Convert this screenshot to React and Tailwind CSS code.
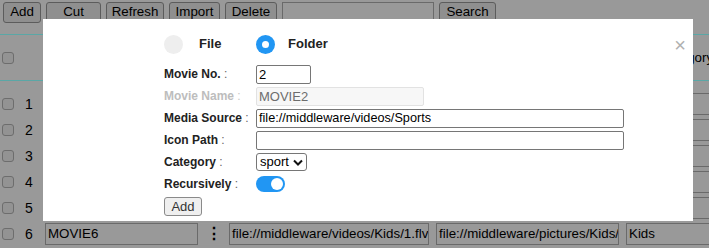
import React from 'react';

const rows = [1, 2, 3, 4, 5, 6];

const ToolButton = ({ label, width }) => (
  <button
    className="h-[21px] shrink-0 rounded-[3px] border border-[#5c5c5c] bg-[#8f8f8f] text-[13.33px] leading-none text-black"
    style={{ width }}
  >
    {label}
  </button>
);

const Box = () => (
  <span className="block h-[12px] w-[12px] shrink-0 rounded-[3px] border border-[#6d6d6d] bg-[#939393]" />
);

const FormRow = ({ label, muted, children }) => (
  <div className="flex h-[22px] items-center">
    <div className={`w-[92px] shrink-0 whitespace-pre text-[12px] ${muted ? 'text-[#bdbdbd]' : 'text-[#222]'}`}>
      <span className="font-bold">{label}</span>
      <span className={muted ? 'text-[#c8c8c8]' : 'text-[#666]'}> :</span>
    </div>
    {children}
  </div>
);

const App = () => {
  return (
    <div className="relative h-[248px] w-[709px] overflow-hidden bg-[#999999] [font-family:'Liberation_Sans',Arial,sans-serif]">
      {/* Toolbar */}
      <div className="flex h-[23px] items-center gap-[5px] pl-[3px] pt-[1px]">
        <ToolButton label="Add" width={38} />
        <ToolButton label="Cut" width={55} />
        <ToolButton label="Refresh" width={58} />
        <ToolButton label="Import" width={51} />
        <ToolButton label="Delete" width={52} />
        <div className="h-[21px] w-[152px] shrink-0 border border-[#6a6a6a] bg-[#999999]" />
        <ToolButton label="Search" width={57} />
      </div>

      {/* Table */}
      <div className="mt-[11px] border-t border-[#5aa7a6]">
        <div className="flex h-[46px] items-center border-b border-[#5aa7a6] pl-[2px]">
          <Box />
          <span className="ml-[645px] shrink-0 whitespace-nowrap text-[13.33px] text-black">Category</span>
        </div>
        <div className="pt-[10px]">
          {rows.map((n) => (
            <div key={n} className="flex h-[26px] items-center pl-[2px] text-[13.33px] text-black">
              <Box />
              <span className="ml-[11px] w-[20px] shrink-0 text-[14px]">{n}</span>
              <div className="h-[22px] w-[153px] shrink-0 border border-[#6a6a6a] px-[2px] leading-[20px]">MOVIE{n}</div>
              <span className="w-[31px] shrink-0 text-center text-[16px] font-bold">⋮</span>
              <div className="h-[22px] w-[200px] shrink-0 overflow-hidden whitespace-nowrap border border-[#6a6a6a] px-[2px] leading-[20px]">
                file://middleware/videos/Kids/1.flv
              </div>
              <div className="ml-[7px] h-[22px] w-[183px] shrink-0 overflow-hidden whitespace-nowrap border border-[#6a6a6a] px-[2px] leading-[20px]">
                file://middleware/pictures/Kids/1.png
              </div>
              <div className="ml-[7px] h-[22px] w-[100px] shrink-0 border border-[#6a6a6a] px-[2px] leading-[20px]">Kids</div>
            </div>
          ))}
        </div>
      </div>

      {/* Modal */}
      <div className="absolute left-[43px] top-[19px] h-[202px] w-[650px] bg-white pl-[121px] pt-[15px]">
        <span className="absolute right-[7px] top-[16px] text-[20px] leading-none text-[#b0b0b0]">×</span>

        <div className="flex h-[20px] items-center">
          <div className="flex w-[92px] items-center">
            <span className="h-[19px] w-[19px] rounded-full bg-[#eeeeee]" />
            <span className="ml-[16px] text-[13px] font-bold text-[#222]">File</span>
          </div>
          <div className="flex items-center">
            <span className="flex h-[19px] w-[19px] items-center justify-center rounded-full bg-[#2196f3]">
              <span className="h-[7px] w-[7px] rounded-full bg-white" />
            </span>
            <span className="ml-[13px] text-[13px] font-bold text-[#222]">Folder</span>
          </div>
        </div>

        <div className="mt-[9px] flex flex-col">
          <FormRow label="Movie No.">
            <div className="h-[19px] w-[55px] rounded-[2px] border border-[#767676] px-[2px] text-[13px] leading-[17px] text-black">2</div>
          </FormRow>
          <FormRow label="Movie Name" muted>
            <div className="h-[19px] w-[168px] rounded-[2px] border border-[#e2e2e2] bg-[#f7f7f7] px-[2px] text-[13px] leading-[17px] text-[#6d6d6d]">MOVIE2</div>
          </FormRow>
          <FormRow label="Media Source">
            <div className="h-[19px] w-[368px] rounded-[2px] border border-[#767676] px-[2px] text-[12.7px] leading-[17px] text-black">file://middleware/videos/Sports</div>
          </FormRow>
          <FormRow label="Icon Path">
            <div className="h-[19px] w-[368px] rounded-[2px] border border-[#767676]" />
          </FormRow>
          <FormRow label="Category">
            <div className="flex h-[18px] w-[51px] items-center rounded-[3px] border border-[#767676] pl-[3px] text-[13px] text-black">
              sport
              <svg className="ml-[4px]" width="10" height="7" viewBox="0 0 10 7">
                <path d="M1 1.5 L5 5.5 L9 1.5" fill="none" stroke="#111" strokeWidth="2" />
              </svg>
            </div>
          </FormRow>
          <FormRow label="Recursively">
            <span className="flex h-[16px] w-[29px] items-center justify-end rounded-full bg-[#2196f3] pr-[2px]">
              <span className="h-[12px] w-[12px] rounded-full bg-white" />
            </span>
          </FormRow>
          <div className="mt-[-1px]">
            <button className="h-[19px] w-[38px] rounded-[3px] border border-[#8a8a8a] bg-[#efefef] text-[13px] leading-none text-[#333]">
              Add
            </button>
          </div>
        </div>
      </div>
    </div>
  );
};

export default App;
